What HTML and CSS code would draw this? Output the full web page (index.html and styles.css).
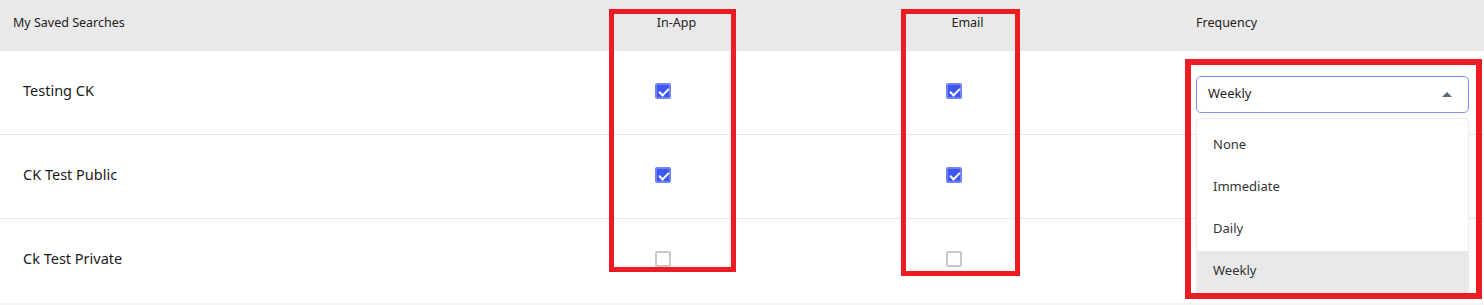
FILE: index.html
```html
<!DOCTYPE html>
<html lang="en">
<head>
  <meta charset="UTF-8" />
  <title>My Saved Searches</title>
  <link rel="stylesheet" href="styles.css">
</head>
<body>
  <div class="table">
    <div class="row head">
      <div class="cell name">My Saved Searches</div>
      <div class="cell check">In-App</div>
      <div class="cell check">Email</div>
      <div class="cell freq">Frequency</div>
    </div>

    <div class="row">
      <div class="cell name">Testing CK</div>
      <div class="cell check"><span class="box on"></span></div>
      <div class="cell check"><span class="box on"></span></div>
      <div class="cell freq">
        <div class="select">
          <div class="field">
            <span>Weekly</span>
            <span class="caret"></span>
          </div>
          <ul class="menu">
            <li>None</li>
            <li>Immediate</li>
            <li>Daily</li>
            <li class="picked">Weekly</li>
          </ul>
        </div>
      </div>
    </div>

    <div class="row">
      <div class="cell name">CK Test Public</div>
      <div class="cell check"><span class="box on"></span></div>
      <div class="cell check"><span class="box on"></span></div>
      <div class="cell freq"></div>
    </div>

    <div class="row last">
      <div class="cell name">Ck Test Private</div>
      <div class="cell check"><span class="box"></span></div>
      <div class="cell check"><span class="box"></span></div>
      <div class="cell freq"></div>
    </div>

    <!-- annotation boxes -->
    <div class="mark mark-app"></div>
    <div class="mark mark-email"></div>
    <div class="mark mark-freq"></div>
  </div>
</body>
</html>
```

FILE: styles.css
```css
* { box-sizing: border-box; margin: 0; padding: 0; }
body {
  font-family: "Noto Sans", "Open Sans", sans-serif;
  background: #f5f5f5;
  color: #1c1c1c;
}
.table { position: relative; background: #fff; }
.row {
  display: grid;
  grid-template-columns: 583px 160px 422px 1fr;
  height: 84px;
  border-bottom: 1px solid #e8e8e8;
}
.row.last { border-bottom: none; }
.cell { display: flex; align-items: center; }
.cell.name { padding-left: 23px; font-size: 14.5px; padding-bottom: 6px; }
.cell.check { justify-content: center; }
.cell.freq { padding: 0 15px 0 31px; align-items: flex-start; padding-top: 25px; }

.head { height: 51px; background: #e9e9e9; border-bottom: none; font-size: 12.5px; color: #222; }
.head .cell { align-items: flex-start; padding-top: 14px; }
.head .cell.name { padding-left: 13px; font-size: 12.5px; }
.head .cell.check { padding-left: 27px; }
.head .cell.freq { padding-top: 14px; }

.box {
  width: 16px; height: 16px; border-radius: 2px;
  border: 2px solid #c9c9c9; background: #fff;
  position: relative;
  margin-bottom: 4px;
}
.box.on { background: #3f57f2; border-color: #6f83f6; }
.box.on::after {
  content: ""; position: absolute;
  left: 3.5px; top: 1px; width: 4px; height: 8px;
  border: solid #fff; border-width: 0 2px 2px 0;
  transform: rotate(45deg);
}

.select { position: relative; width: 273px; }
.field {
  height: 37px; border: 1px solid #7f90f3; border-radius: 5px;
  display: flex; align-items: center; justify-content: space-between;
  padding: 0 16px 3px 11px; font-size: 13px; color: #1c1c1c; background: #fff;
}
.caret {
  width: 0; height: 0;
  border-left: 5px solid transparent; border-right: 5px solid transparent;
  border-bottom: 5px solid #5b6b76;
  margin-top: 3px;
}
.menu {
  position: absolute; left: 0; right: 0; top: 42px; z-index: 2;
  list-style: none; background: #fff;
  border: 1px solid #ececec; border-radius: 5px;
  padding: 6px 0 2px;
  box-shadow: 0 1px 3px rgba(0,0,0,0.04);
}
.menu li { height: 42px; display: flex; align-items: center; padding: 0 0 4px 16px; font-size: 13px; color: #333; }
.menu li.picked { background: #e9e9e9; }

.mark { position: absolute; border: 5px solid #ed1c24; z-index: 3; pointer-events: none; }
.mark-app { left: 609px; top: 9px; width: 127px; height: 263px; }
.mark-email { left: 901px; top: 9px; width: 119px; height: 267px; }
.mark-freq { left: 1185px; top: 59px; width: 297px; height: 240px; border-width: 6px; }
```
